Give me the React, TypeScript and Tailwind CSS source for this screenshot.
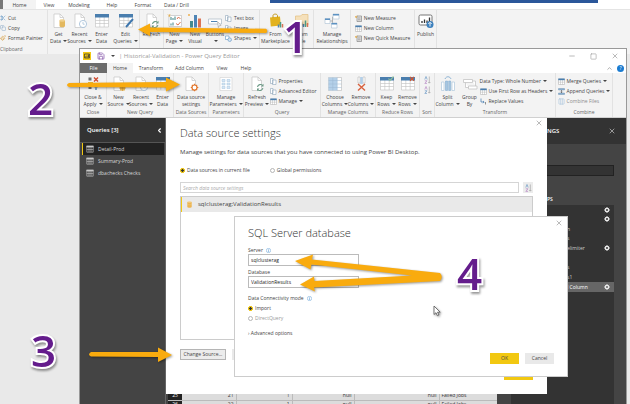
import type { ReactNode } from 'react'
import {
    ChevronLeft, ChevronUp, Columns3, Copy, Minus, Paintbrush,
    Save, Scissors, Square, X,
} from 'lucide-react'

// ---------- icons ----------

const DocIcon = ({ children }: { children?: ReactNode }) => (
    <svg width="16" height="16" viewBox="0 0 16 16" fill="none">
        <path d="M3 1h6l3.500 3.500V14.500H3z" fill="#fff" stroke="#c4c4c4" strokeWidth=".7" />
        <path d="M9 1v3.500h3.500" stroke="#c4c4c4" strokeWidth=".7" />
        {children}
    </svg>
)

const GetDataIcon = () => (
    <DocIcon>
        <path d="M8.500 7.500v5.500c0 1.800 5.500 1.800 5.500 0v-5.500" fill="#e3b85f" />
        <ellipse cx="11.200" cy="7.500" rx="2.800" ry="1.200" fill="#efd08d" />
    </DocIcon>
)

const RecentIcon = () => (
    <DocIcon>
        <circle cx="11" cy="11" r="3.600" fill="#fff" stroke="#9fbbd6" strokeWidth=".8" />
        <path d="M11 9v2.200h1.700" stroke="#9fbbd6" strokeWidth=".7" />
    </DocIcon>
)

const NewSourceIcon = () => (
    <DocIcon>
        <path d="M9 9.500h5v5H9z" fill="#f0bd55" />
        <path d="M11.500 8.500v6.500M8 12h7" stroke="#dd9c2c" strokeWidth=".7" />
    </DocIcon>
)

const RefreshIcon = () => (
    <DocIcon>
        <path d="M8.500 11a3 3 0 0 1 5.200-1.500M13.900 12a3 3 0 0 1-5.200 1.500" stroke="#6c9a86" strokeWidth="1.100" />
        <path d="M14.500 7.800v2.600H12zM8 15.200v-2.600h2.500z" fill="#6c9a86" />
    </DocIcon>
)

const SourceSettingsIcon = () => (
    <DocIcon>
        <circle cx="11.500" cy="11.500" r="2.500" fill="#fff" stroke="#e2762b" strokeWidth="1.200" />
        <path d="M11.500 7.800v1.300M11.500 14v1.300M7.800 11.500h1.300M14 11.500h1.300M8.900 8.900l.9.900M13.200 13.200l.9.900M14.100 8.900l-.9.900M9.800 13.200l-.9.900" stroke="#e2762b" strokeWidth="1.100" />
    </DocIcon>
)

const GridIcon = ({ mark }: { mark?: 'pencil' | 'check' | 'cross' }) => (
    <svg width="16" height="16" viewBox="0 0 16 16" fill="none">
        <path d="M1.500 1.500h13v12.500h-13z" fill="#fff" stroke="#c0c0c0" strokeWidth=".6" />
        <path d="M1.500 7.500h13M1.500 10.500h13M5.800 4v10M10.200 4v10" stroke="#c0c0c0" strokeWidth=".6" />
        <path d="M1 1h14v3.500H1z" fill="#4a7eae" />
        {mark === 'pencil' && <path d="M15 6l-7 8" stroke="#3e76ad" strokeWidth="1.900" />}
        {mark === 'check' && <path d="M9.500 2.500l1.500 2 3.500-4" stroke="#8fc09f" strokeWidth="1.200" />}
        {mark === 'cross' && <path d="M10 .8l4 4M14 .8l-4 4" stroke="#d4562f" strokeWidth="1.200" />}
    </svg>
)

const CloseApplyIcon = () => (
    <svg width="16" height="16" viewBox="0 0 16 16" fill="none">
        <path d="M3.500 1.500h3v3h-3zM3.500 10h3v3h-3z" fill="#707070" />
        <path d="M3 7h5" stroke="#e7b53a" strokeWidth="2" />
        <path d="M9 1.500l4 4M13 1.500l-4 4" stroke="#cf4a2f" strokeWidth="1.400" />
        <path d="M11 14V9M9 11l2-2 2 2" stroke="#3e76ad" strokeWidth="1.200" />
    </svg>
)

const PageIcon = () => (
    <svg width="16" height="16" viewBox="0 0 16 16" fill="none">
        <path d="M2 2.500h12.500v11H2z" fill="#fff" stroke="#b7b7b7" strokeWidth=".6" />
        <path d="M4 7V4M6 7V5M8 7V3.500M4 12.500v-2M6 12.500V9.500" stroke="#4d8f92" strokeWidth="1.100" />
        <path d="M10 6l1.500-2L13.500 6M9 10.500l2 1.500 2.500-3" stroke="#d5633f" strokeWidth=".9" />
        <path d="M1 1.500l2 2M3 1l-1 3" stroke="#e3a944" strokeWidth=".8" />
    </svg>
)

const VisualIcon = () => (
    <svg width="16" height="16" viewBox="0 0 16 16">
        <path d="M3 8h3v6.500H3z" fill="#438b8f" />
        <path d="M7 2h3v12.500H7z" fill="#4d84b5" />
        <path d="M11 5.500h3v9h-3z" fill="#da7455" />
        <path d="M1 1h2v2H1z" fill="#efc079" />
    </svg>
)

const ButtonsIcon = () => (
    <svg width="16" height="16" viewBox="0 0 16 16" fill="none">
        <path d="M1.500 6h13v5h-13z" fill="#fff" stroke="#a9b7c4" strokeWidth=".7" />
        <path d="M4 8.500h6" stroke="#4d84b5" />
        <path d="M10.500 8.500l3.500 4-1.700.2-.9 1.800z" fill="#fff" stroke="#999" strokeWidth=".6" />
    </svg>
)

const MarketIcon = () => (
    <svg width="16" height="16" viewBox="0 0 16 16" fill="none">
        <path d="M2 4.500l10-1 .8 9-10 1z" fill="#e2b21e" />
        <path d="M5 5V2.500C5 .8 9 .5 9.500 2.500v2" stroke="#c59a1d" />
        <path d="M10.500 14.500v-3" stroke="#4d84b5" strokeWidth="1.500" />
        <path d="M12.500 14.500V9" stroke="#4d9a83" strokeWidth="1.500" />
        <path d="M14.500 14.500V11" stroke="#da7455" strokeWidth="1.500" />
    </svg>
)

const FolderIcon = () => (
    <svg width="16" height="16" viewBox="0 0 16 16" fill="none">
        <path d="M1.500 3h5l1.500-1.500h6V12h-12.500z" fill="#f5e0ba" stroke="#e2bf80" strokeWidth=".7" />
        <path d="M9.500 14v-3" stroke="#4d84b5" strokeWidth="1.500" />
        <path d="M11.500 14V7.500" stroke="#4d9a83" strokeWidth="1.500" />
        <path d="M13.500 14V10" stroke="#da7455" strokeWidth="1.500" />
    </svg>
)

const RelationIcon = () => (
    <svg width="16" height="16" viewBox="0 0 16 16" fill="none">
        <path d="M5.500 8h3M8.500 4v8M8.500 4h2" stroke="#999" strokeWidth=".7" />
        <path d="M1 5.500h5v5H1zM9 1h6v5H9zM7.500 10h5.500v5H7.500z" fill="#fff" stroke="#a9bfd4" strokeWidth=".6" />
        <path d="M1 5.500h5v1.600H1zM9 1h6v1.600H9zM7.500 10H13v1.600H7.500z" fill="#5d92c2" />
    </svg>
)

const PublishIcon = () => (
    <svg width="16" height="16" viewBox="0 0 16 16" fill="none">
        <rect x="1" y="2" width="13" height="10" rx="1.500" fill="#fff" stroke="#666" strokeWidth=".9" />
        <path d="M4 10V8M6.500 10V6.500M9 10V7.500M11.500 10V4.500" stroke="#333" strokeWidth="1.300" />
        <circle cx="12" cy="11.500" r="3.500" fill="#3c80bd" />
        <path d="M12 13.500v-4M10.300 11l1.700-1.700 1.700 1.700" stroke="#fff" strokeWidth=".9" />
    </svg>
)

const ParamsIcon = () => (
    <svg width="16" height="16" viewBox="0 0 16 16" fill="none">
        <path d="M2 1.500h12v13H2z" fill="#fff" stroke="#d0d0d0" strokeWidth=".6" />
        <path d="M4 3.500h3v2H4zM4 7h3v2H4zM4 10.500h3v2H4zM9 3.500h3v2H9zM9 7h3v2H9zM9 10.500h3v2H9z" fill="#d6e6f4" stroke="#a5c4de" strokeWidth=".5" />
    </svg>
)

const ColumnsIcon = ({ remove }: { remove?: boolean }) => (
    <svg width="16" height="16" viewBox="0 0 16 16" fill="none">
        {remove ? (
            <>
                <path d="M5 1h2v6H5zM10 1h2v6h-2z" fill="#fff" stroke="#b9b9b9" strokeWidth=".6" />
                <path d="M7.200 1h2.600v7H7.200z" fill="#b4d0e9" />
                <path d="M5 8l7 6.500M12 8l-7 6.500" stroke="#d8623f" strokeWidth="1.400" />
            </>
        ) : (
            <>
                <path d="M1.500 1.500h13v13h-13z" fill="#fff" stroke="#b9b9b9" strokeWidth=".6" />
                <path d="M1.500 1.500h8.700v13H1.500z" fill="#b4d0e9" />
                <path d="M1.500 4.500h13M1.500 8h13M1.500 11.500h13M5.800 1.500v13M10.200 1.500v13" stroke="#9db9d2" strokeWidth=".5" />
            </>
        )}
    </svg>
)

const SplitIcon = () => (
    <svg width="16" height="16" viewBox="0 0 16 16" fill="none">
        <path d="M1.500 6h2.500v8.500H1.500zM12 6h2.500v8.500H12z" fill="#fff" stroke="#b0c8dd" strokeWidth=".7" />
        <path d="M5.500 5h2v9.500h-2zM8.700 5h2v9.500h-2z" fill="#a5c6e2" stroke="#79a6cd" strokeWidth=".5" />
        <path d="M5 3c1-3 5-3 6 0" stroke="#79a6cd" strokeWidth=".8" />
    </svg>
)

const GroupByIcon = () => (
    <svg width="16" height="16" viewBox="0 0 16 16" fill="none">
        <path d="M1.500 3.500h9v3h-9zM6.500 10h8.500v3H6.500zM3.500 6.500v5h3M10.500 5h3v5" fill="#fff" stroke="#c4c4c4" strokeWidth=".8" />
    </svg>
)

const MiniDoc = () => (
    <svg width="7" height="7" viewBox="0 0 7 7" fill="none">
        <path d="M.5.500h2.500v5H.5zM2.500 2h3.500v4.500h-3.500z" fill="#fff" stroke="#8fa6ba" strokeWidth=".6" />
    </svg>
)

const MiniTable = () => (
    <svg width="7" height="7" viewBox="0 0 7 7" fill="none">
        <path d="M.5 1h6v5.500h-6z" fill="#fff" stroke="#a8a8a8" strokeWidth=".5" />
        <path d="M2.500 2v4.500M4.500 2v4.500M.5 4.200h6" stroke="#a8a8a8" strokeWidth=".4" />
        <path d="M.3.500h6.400v1.700H.3z" fill="#4a7eae" />
    </svg>
)

const QueryIcon = () => (
    <svg width="8" height="8" viewBox="0 0 8 8" fill="none" stroke="#c8c8c8">
        <path d="M.5 1.500h7" strokeWidth="1.800" />
        <path d="M.8 1v6.200h6.400V1M3 2v5M5 2v5M.8 4.600h6.400" strokeWidth=".6" />
    </svg>
)

const MiniShapes = () => (
    <svg width="7" height="7" viewBox="0 0 7 7" fill="none">
        <path d="M.5 1h3.500v3.500H.5z" fill="#fff" stroke="#5d92c2" strokeWidth=".6" />
        <circle cx="4.700" cy="4.700" r="1.800" fill="#d6e6f4" stroke="#5d92c2" strokeWidth=".6" />
    </svg>
)

const MiniMeasure = () => (
    <svg width="7" height="7" viewBox="0 0 7 7" fill="none">
        <path d="M2 1h4.500v5.500H2z" fill="#e4e4e4" stroke="#777" strokeWidth=".6" />
        <path d="M0 1l2 2M2 .5L.5 3" stroke="#e3a944" strokeWidth=".7" />
        <path d="M3 3h2.500M3 4.800h2.500" stroke="#777" strokeWidth=".6" />
    </svg>
)

const MiniReplace = () => (
    <svg width="7" height="7" viewBox="0 0 7 7" fill="none">
        <path d="M1 .5v3.500h3M3 3l1.200 1L3 5.200" stroke="#3e76ad" strokeWidth=".7" />
        <path d="M5.500 4v2.500" stroke="#777" strokeWidth=".8" />
    </svg>
)

const MiniAppend = () => (
    <svg width="7" height="7" viewBox="0 0 7 7" fill="none">
        <path d="M.5.500h6v1.500h-6zM.5 5h6v1.500h-6z" fill="#8fb4d4" stroke="#5d86aa" strokeWidth=".4" />
        <path d="M3.500 2v2.600M2.500 3.700l1 1 1-1" stroke="#444" strokeWidth=".6" />
    </svg>
)

const SortIcon = ({ flip }: { flip?: boolean }) => (
    <svg width="7" height="8" viewBox="0 0 7 8" fill="none">
        <path d="M.8 3.500L2 .5l1.200 3" stroke={flip ? '#b78ac6' : '#6c9ac6'} strokeWidth=".7" />
        <path d="M.8 4.800h2.200L.8 7.400H3" stroke={flip ? '#6c9ac6' : '#b78ac6'} strokeWidth=".7" />
        <path d="M5.300.5v6.500M4.200 6l1.100 1.200L6.400 6" stroke="#999" strokeWidth=".6" />
    </svg>
)

const GearIcon = () => (
    <svg width="6" height="6" viewBox="0 0 6 6" fill="none" stroke="#eee">
        <circle cx="3" cy="3" r="1.600" strokeWidth="1.200" />
        <path d="M3 0v1M3 5v1M0 3h1M5 3h1M.9.900l.7.700M4.400 4.400l.7.700M5.100.9l-.7.700M1.600 4.400l-.7.700" strokeWidth=".9" />
    </svg>
)

const DatabaseIcon = () => (
    <svg width="5" height="7" viewBox="0 0 5 7">
        <path d="M.3 1v5c0 1 4.400 1 4.400 0V1z" fill="#ecb552" />
        <ellipse cx="2.500" cy="1" rx="2.200" ry=".8" fill="#f6d38e" />
        <path d="M.3 3.200c0 .8 4.400.8 4.400 0" fill="none" stroke="#f6d38e" strokeWidth=".4" />
    </svg>
)

// ---------- ribbon pieces ----------

type Tool = { icon: ReactNode; lines: string[]; width: string; drop?: boolean }

const Caret = () => <span className="inline-block ml-0.5 mb-px border-x-2 border-x-transparent border-t-2 border-t-[#444] align-middle" />

const ToolButton = ({ icon, lines, width, drop }: Tool) => (
    <button type="button" className={`${width} shrink-0 flex flex-col items-center`}>
        {icon}
        <span className="mt-0.5 text-center leading-[7px] whitespace-nowrap">
            {lines[0]}
            <br />
            {lines[1]}
            {drop && <Caret />}
        </span>
    </button>
)

const SmallButton = ({ icon, text, drop, muted }: { icon?: ReactNode; text: string; drop?: boolean; muted?: boolean }) => (
    <button type="button" className={`h-[10px] flex items-center gap-0.5 whitespace-nowrap ${muted ? 'text-[#8c8c8c]' : ''}`}>
        {icon}
        <span>{text}{drop && <Caret />}</span>
    </button>
)

const Group = ({ label, width, children }: { label?: string; width: string; children: ReactNode }) => (
    <div className={`${width} shrink-0 flex flex-col justify-between border-r border-[#e2e2e2]`}>
        <div className="flex justify-center pt-[3px]">{children}</div>
        {label && <div className="h-2 text-center leading-[7px] text-[#666] whitespace-nowrap">{label}</div>}
    </div>
)

const outerTabs = [
    { name: 'Home', width: 'w-[33px] bg-[#f3f3f3]' },
    { name: 'View', width: 'w-[26px]' },
    { name: 'Modeling', width: 'w-[34px]' },
    { name: 'Help', width: 'w-[32px]' },
    { name: 'Format', width: 'w-[30px]' },
    { name: 'Data / Drill', width: 'w-[37px]' },
]

const editorTabs = [
    { name: 'File', width: 'w-[27px] bg-[#6c6c6c] text-white' },
    { name: 'Home', width: 'w-[26px] bg-[#f3f3f3]' },
    { name: 'Transform', width: 'w-[36px]' },
    { name: 'Add Column', width: 'w-[41px]' },
    { name: 'View', width: 'w-[24px]' },
    { name: 'Help', width: 'w-[24px]' },
]

function ReportRibbon() {
    return (
        <header>
            <nav className="h-[9px] flex bg-white">
                <span className="w-[3px] bg-[#777]" />
                {outerTabs.map((tab) => (
                    <button key={tab.name} type="button" className={`${tab.width} shrink-0 leading-[8px] whitespace-nowrap`}>
                        {tab.name}
                    </button>
                ))}
            </nav>
            <div className="h-[45px] flex bg-[#f3f3f3] border-t border-[#e4e4e4]">
                <div className="w-[48px] shrink-0 flex flex-col border-r border-[#e2e2e2] pt-[3px]">
                    <SmallButton icon={<Scissors size={6} color="#5d92c2" />} text="Cut" />
                    <SmallButton icon={<Copy size={6} color="#8aa9c6" />} text="Copy" />
                    <SmallButton icon={<Paintbrush size={6} color="#d59b3a" />} text="Format Painter" />
                    <span className="mt-auto h-2 leading-[7px] text-[#666]">Clipboard</span>
                </div>
                <Group width="w-[92px]">
                    <ToolButton icon={<GetDataIcon />} lines={['Get', 'Data']} width="w-[20px]" drop />
                    <ToolButton icon={<RecentIcon />} lines={['Recent', 'Sources']} width="w-[22px]" drop />
                    <ToolButton icon={<GridIcon />} lines={['Enter', 'Data']} width="w-[22px]" />
                    <ToolButton icon={<GridIcon mark="pencil" />} lines={['Edit', 'Queries']} width="w-[26px]" drop />
                </Group>
                <Group width="w-[24px]">
                    <ToolButton icon={<RefreshIcon />} lines={['Refresh', '']} width="w-[23px]" />
                </Group>
                <Group width="w-[96px]">
                    <ToolButton icon={<PageIcon />} lines={['New', 'Page']} width="w-[21px]" drop />
                    <ToolButton icon={<VisualIcon />} lines={['New', 'Visual']} width="w-[20px]" />
                    <ToolButton icon={<ButtonsIcon />} lines={['Buttons', '']} width="w-[20px]" drop />
                    <div className="w-[34px]">
                        <SmallButton icon={<MiniDoc />} text="Text box" />
                        <SmallButton icon={<MiniDoc />} text="Image" />
                        <SmallButton icon={<MiniShapes />} text="Shapes" drop />
                    </div>
                </Group>
                <Group width="w-[54px]">
                    <ToolButton icon={<MarketIcon />} lines={['From', 'Marketplace']} width="w-[30px]" />
                    <ToolButton icon={<FolderIcon />} lines={['From', 'File']} width="w-[22px]" />
                </Group>
                <Group width="w-[37px]">
                    <ToolButton icon={<RelationIcon />} lines={['Manage', 'Relationships']} width="w-[35px]" />
                </Group>
                <Group width="w-[64px]">
                    <div>
                        <SmallButton icon={<MiniMeasure />} text="New Measure" />
                        <SmallButton icon={<MiniTable />} text="New Column" />
                        <SmallButton icon={<MiniMeasure />} text="New Quick Measure" />
                    </div>
                </Group>
                <Group width="w-[22px]">
                    <ToolButton icon={<PublishIcon />} lines={['Publish', '']} width="w-[21px]" />
                </Group>
            </div>
        </header>
    )
}

function EditorRibbon() {
    return (
        <div className="h-[45px] shrink-0 flex bg-[#f3f3f3] border-b border-[#d0d0d0]">
            <Group label="Close" width="w-[27px]">
                <ToolButton icon={<CloseApplyIcon />} lines={['Close &', 'Apply']} width="w-[25px]" drop />
            </Group>
            <Group label="New Query" width="w-[67px]">
                <ToolButton icon={<NewSourceIcon />} lines={['New', 'Source']} width="w-[22px]" drop />
                <ToolButton icon={<RecentIcon />} lines={['Recent', 'Sources']} width="w-[23px]" drop />
                <ToolButton icon={<GridIcon />} lines={['Enter', 'Data']} width="w-[20px]" />
            </Group>
            <Group label="Data Sources" width="w-[35px]">
                <ToolButton icon={<SourceSettingsIcon />} lines={['Data source', 'settings']} width="w-[32px]" />
            </Group>
            <Group label="Parameters" width="w-[35px]">
                <ToolButton icon={<ParamsIcon />} lines={['Manage', 'Parameters']} width="w-[32px]" drop />
            </Group>
            <Group label="Query" width="w-[77px]">
                <ToolButton icon={<RefreshIcon />} lines={['Refresh', 'Preview']} width="w-[25px]" drop />
                <div className="w-[50px]">
                    <SmallButton icon={<MiniDoc />} text="Properties" />
                    <SmallButton icon={<MiniDoc />} text="Advanced Editor" />
                    <SmallButton icon={<MiniTable />} text="Manage" drop />
                </div>
            </Group>
            <Group label="Manage Columns" width="w-[55px]">
                <ToolButton icon={<ColumnsIcon />} lines={['Choose', 'Columns']} width="w-[26px]" drop />
                <ToolButton icon={<ColumnsIcon remove />} lines={['Remove', 'Columns']} width="w-[26px]" drop />
            </Group>
            <Group label="Reduce Rows" width="w-[44px]">
                <ToolButton icon={<GridIcon mark="check" />} lines={['Keep', 'Rows']} width="w-[20px]" drop />
                <ToolButton icon={<GridIcon mark="cross" />} lines={['Remove', 'Rows']} width="w-[22px]" drop />
            </Group>
            <Group label="Sort" width="w-[15px]">
                <div className="flex flex-col gap-0.5">
                    <button type="button" aria-label="Sort ascending"><SortIcon /></button>
                    <button type="button" aria-label="Sort descending"><SortIcon flip /></button>
                </div>
            </Group>
            <Group label="Transform" width="w-[121px]">
                <ToolButton icon={<SplitIcon />} lines={['Split', 'Column']} width="w-[24px]" drop />
                <ToolButton icon={<GroupByIcon />} lines={['Group', 'By']} width="w-[20px]" />
                <div className="w-[75px]">
                    <SmallButton text="Data Type: Whole Number" drop />
                    <SmallButton icon={<MiniTable />} text="Use First Row as Headers" drop />
                    <SmallButton icon={<MiniReplace />} text="Replace Values" />
                </div>
            </Group>
            <Group label="Combine" width="w-[57px]">
                <div>
                    <SmallButton icon={<MiniTable />} text="Merge Queries" drop />
                    <SmallButton icon={<MiniAppend />} text="Append Queries" drop />
                    <SmallButton icon={<Columns3 size={7} color="#a9c4dc" />} text="Combine Files" muted />
                </div>
            </Group>
        </div>
    )
}

// ---------- editor body ----------

const queries = ['Detail-Prod', 'Summary-Prod', 'dbachecks Checks']

const steps = [
    { text: '', gear: true },
    { text: '', gear: true },
    { text: 'n' },
    { text: 's' },
    { text: 'elimiter', gear: true },
    { text: '' },
    { text: 's' },
    { text: 's1' },
    { text: 'l Column', gear: true, active: true },
]

const rows = [
    ['25', '21', '1', 'null', 'null', 'Failed Jobs'],
    ['26', '22', '1', 'null', 'null', 'Failed Jobs'],
]

function QueryList() {
    return (
        <aside className="w-[86px] shrink-0 bg-[#444] text-[#d8d8d8] border-r border-[#666]">
            <div className="h-[25px] flex items-center justify-between pl-[7px] pr-[2px] bg-[#333] border-b border-[#555]">
                <h2 className="text-[6px] font-semibold text-white">Queries [3]</h2>
                <button type="button" aria-label="Collapse"><ChevronLeft size={7} strokeWidth={4} color="#fff" /></button>
            </div>
            <ul>
                {queries.map((query, index) => (
                    <li key={query} className={`h-3 flex items-center gap-1 pl-[3px] ml-0.5 mr-px border-l ${index === 0 ? 'bg-[#222] border-[#f2c811]' : 'border-transparent'}`}>
                        <QueryIcon />
                        {query}
                    </li>
                ))}
            </ul>
        </aside>
    )
}

function QuerySettings() {
    return (
        <aside className="w-[129px] shrink-0 bg-[#444] text-[#ccc]">
            <div className="h-[26px] flex items-center justify-between pl-[50px] pr-[10px] bg-[#333]">
                <h2 className="text-[6px] font-semibold text-white">NGS</h2>
                <button type="button" aria-label="Close settings"><X size={8} color="#ccc" /></button>
            </div>
            <div className="pl-[14px] pr-3">
                <input aria-label="Name" className="block w-full h-[11px] mt-[21px] bg-[#333] border border-[#222]" />
                <h3 className="h-[10px] mt-[18px] pl-[36px] leading-[10px] font-semibold text-white">PS</h3>
                <ul className="grid grid-rows-9 h-[87px] mt-px bg-[#333]">
                    {steps.map((step, index) => (
                        <li key={index} className={`flex items-center justify-between pl-[56px] pr-1 ${step.active ? 'bg-[#666] text-white' : ''}`}>
                            <span>{step.text}</span>
                            {step.gear && <GearIcon />}
                        </li>
                    ))}
                </ul>
                <div className="h-[112px] bg-[#333]" />
            </div>
        </aside>
    )
}

function PreviewGrid() {
    return (
        <main className="flex-1 min-w-0 pt-[274px] pl-0.5 bg-[#444]">
            <table className="w-full table-fixed border-collapse bg-[#dcdcdc] text-[#333]">
                <tbody>
                    {rows.map((row) => (
                        <tr key={row[0]} className="h-2 leading-[7px] border-b border-[#bbb]">
                            <td className="w-[14px] bg-[#222] text-center text-white">{row[0]}</td>
                            <td className="w-[54px] px-0.5 text-right border-r border-[#bbb]">{row[1]}</td>
                            <td className="w-[56px] px-0.5 text-right border-r border-[#bbb]">{row[2]}</td>
                            <td className="w-[62px] px-0.5 text-right border-r border-[#bbb]">{row[3]}</td>
                            <td className="px-0.5 text-right border-r border-[#bbb]">{row[4]}</td>
                            <td className="w-[58px] px-0.5">{row[5]}</td>
                        </tr>
                    ))}
                </tbody>
            </table>
        </main>
    )
}

// ---------- dialogs ----------

const radio = 'appearance-none size-[5px] rounded-full border border-[#b5b5b5] bg-white checked:border-[#f2c811] checked:bg-[#333] checked:outline checked:-outline-offset-1 checked:outline-[#f2c811]'

const Info = () => (
    <svg width="5" height="5" viewBox="0 0 10 10" className="inline-block ml-0.5" fill="none" stroke="#5a9bd5">
        <circle cx="5" cy="5" r="4.300" />
        <path d="M5 4.300v3.500M5 2.200v1.200" strokeWidth="1.300" />
    </svg>
)

function SqlDialog() {
    return (
        <div role="dialog" aria-label="SQL Server database" className="absolute left-[68px] -right-[21px] top-[98px] h-[161px] px-[13px] bg-white border border-[#ccc]">
            <button type="button" aria-label="Close dialog" className="absolute right-1 top-0.5"><X size={8} strokeWidth={1.5} color="#777" /></button>
            <h2 className="mt-[8px] text-[11px] leading-[16px] font-light text-[#333]">SQL Server database</h2>
            <label htmlFor="server" className="block mt-[6px] leading-[7px]">Server <Info /></label>
            <input id="server" defaultValue="sqlclusterag" className="block w-[111px] h-[12px] pl-0.5 text-[#222] border border-[#bbb]" />
            <label htmlFor="database" className="block mt-[3px] leading-[7px]">Database</label>
            <input id="database" defaultValue="ValidationResults" className="block w-[111px] h-[12px] pl-0.5 text-[#222] border border-[#bbb]" />
            <p className="mt-[7px] leading-[7px]">Data Connectivity mode <Info /></p>
            <label className="flex items-center gap-0.5 h-[10px] mt-px"><input type="radio" name="mode" defaultChecked className={radio} />Import</label>
            <label className="flex items-center gap-0.5 h-[10px] text-[#999]"><input type="radio" name="mode" className={radio} />DirectQuery</label>
            <button type="button" className="block mt-[7px] leading-[7px]">› Advanced options</button>
            <div className="flex justify-end gap-1.5 mt-4">
                <button type="button" className="w-[29px] h-[11px] bg-[#f2c811]">OK</button>
                <button type="button" className="w-[29px] h-[11px] bg-[#e9e9e9]">Cancel</button>
            </div>
        </div>
    )
}

function SourceDialog() {
    return (
        <div role="dialog" aria-label="Data source settings" className="absolute left-[86px] right-[79px] top-0 h-[276px] px-[14px] bg-white text-[#444]">
            <button type="button" aria-label="Close" className="absolute right-1 top-px"><X size={8} strokeWidth={1.5} color="#777" /></button>
            <h1 className="mt-[7px] text-[11px] leading-[16px] font-light text-[#333]">Data source settings</h1>
            <p className="mt-[7px] text-[6px] leading-[8px] whitespace-nowrap">Manage settings for data sources that you have connected to using Power BI Desktop.</p>
            <div className="flex gap-5 mt-[10px] leading-[8px]">
                <label className="flex items-center gap-0.5"><input type="radio" name="scope" defaultChecked className={radio} />Data sources in current file</label>
                <label className="flex items-center gap-0.5"><input type="radio" name="scope" className={radio} />Global permissions</label>
            </div>
            <div className="flex gap-1 mt-[8px]">
                <input aria-label="Search data source settings" placeholder="Search data source settings" className="flex-1 min-w-0 h-[11px] pl-0.5 border border-[#d5d5d5] placeholder:italic placeholder:text-[#aaa]" />
                <button type="button" aria-label="Sort" className="w-[10px] h-[11px] flex items-center justify-center bg-[#ececec]"><SortIcon /></button>
            </div>
            <div className="h-[144px] mt-[3px] border border-[#ccc]">
                <div className="h-[15px] flex items-center gap-1.5 pl-[5px] border-l border-[#f2c811] bg-[#e9e9e9] text-[6px]">
                    <DatabaseIcon />
                    sqlclusterag;ValidationResults
                </div>
            </div>
            <div className="flex gap-1.5 mt-[9px]">
                <button type="button" className="w-[46px] h-[11px] bg-[#ececec] border border-[#b5b5b5] whitespace-nowrap leading-[9px]">Change Source...</button>
                <span className="w-9 h-[11px] bg-[#e9e9e9]" />
            </div>
            <div className="flex justify-end mt-[9px]">
                <button type="button" aria-label="Close settings dialog" className="w-[29px] h-[11px] bg-[#f2c811]" />
            </div>
            <SqlDialog />
        </div>
    )
}

function QueryEditor() {
    return (
        <section className="absolute left-[79px] right-[3px] top-12 bottom-0 flex flex-col bg-white border-x border-t border-[#999] overflow-hidden">
            <div className="h-[14px] shrink-0 flex items-center gap-1 px-[3px] text-[#999]">
                <span className="size-2 flex items-center justify-center bg-[#f2c811]">
                    <svg width="6" height="6" viewBox="0 0 6 6"><path d="M.5 1h5v4h-5z" fill="none" stroke="#333" strokeWidth=".7" /><path d="M1.500 4.500v-1M3 4.500v-2M4.500 4.500v-3" stroke="#333" strokeWidth=".8" /></svg>
                </span>
                <Save size={8} color="#7d4aa5" className="ml-0.5" />
                <Caret />
                <span className="text-[6px] whitespace-nowrap">| Historical-Validation - Power Query Editor</span>
                <div className="flex items-center gap-[14px] ml-auto pr-[4px]">
                    <button type="button" aria-label="Minimize"><Minus size={8} /></button>
                    <button type="button" aria-label="Maximize"><Square size={7} /></button>
                    <button type="button" aria-label="Close window"><X size={8} /></button>
                </div>
            </div>
            <nav className="h-[10px] shrink-0 flex">
                {editorTabs.map((tab) => (
                    <button key={tab.name} type="button" className={`${tab.width} shrink-0 whitespace-nowrap`}>{tab.name}</button>
                ))}
                <span className="flex items-center gap-1 ml-auto pr-0.5">
                    <ChevronUp size={7} color="#777" />
                    <button type="button" className="size-[7px] rounded-full bg-[#1a7bd0] text-white leading-[7px]">?</button>
                </span>
            </nav>
            <EditorRibbon />
            <div className="relative flex-1 min-h-0 flex">
                <QueryList />
                <PreviewGrid />
                <QuerySettings />
                <SourceDialog />
            </div>
        </section>
    )
}

// ---------- callouts ----------

const numeral = 'absolute text-[44px] leading-[44px] font-semibold text-[#641c8c] [paint-order:stroke] [-webkit-text-stroke:4px_white] drop-shadow-[1px_2px_1px_#0006]'

function Callouts() {
    return (
        <div className="absolute inset-0 pointer-events-none">
            <div className="absolute left-[270px] right-8 top-0 h-[3px] bg-[#2b579a]" />
            <svg width="630" height="404" viewBox="0 0 630 404" className="absolute left-0 top-0 drop-shadow-[1px_1px_1px_#0006]" fill="#f9ab0e">
                <path d="M138 29.500L150 23.500V27.500L266 28.800Q268.500 31 266 33L150 32V36z" />
                <path d="M180 84.500L166 91.500V87.500L69 87Q65 85 69 83L166 82V77.500z" />
                <path d="M172 355L158 362V357L91 356.500Q87 354.500 91 352L158 352V347.500z" />
                <path d="M295 261L313 254.500L312 259.500L440 273Q443.500 277 440 281L314 287.500L315 291.500L300 284.500L314 276.500L314.500 281L412 275.500L311.500 264.500L310.500 269.500z" />
                <path d="M434 306v8.500l2-1.800 1.400 3 1.500-.7-1.400-2.800h2.700z" fill="#fff" stroke="#555" strokeWidth=".8" />
            </svg>
            <span className={`${numeral} left-[283px] top-[14px]`}>1</span>
            <span className={`${numeral} left-[28px] top-[76px]`}>2</span>
            <span className={`${numeral} left-[31px] top-[328px]`}>3</span>
            <span className={`${numeral} left-[457px] top-[251px]`}>4</span>
        </div>
    )
}

export default function App() {
    return (
        <div className="relative h-screen overflow-hidden bg-[#e9e9e9] font-['Open_Sans',sans-serif] text-[5px] leading-[7px] text-[#444]">
            <ReportRibbon />
            <QueryEditor />
            <Callouts />
        </div>
    )
}
